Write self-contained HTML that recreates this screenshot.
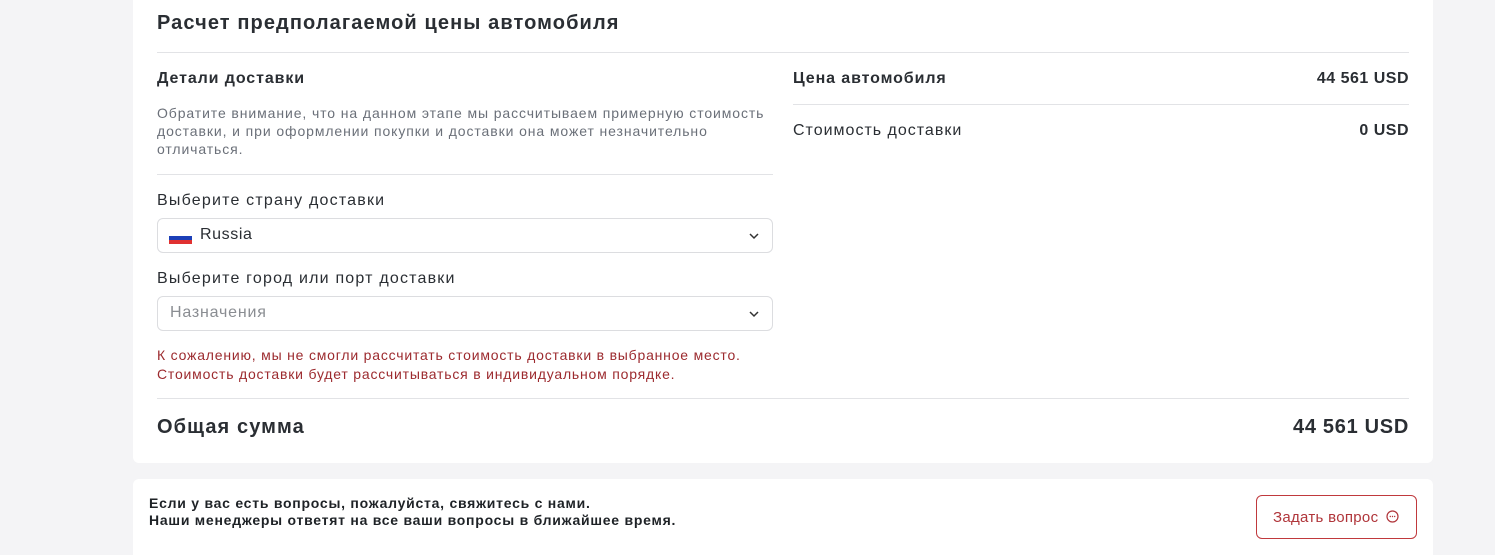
<!DOCTYPE html>
<html><head><meta charset="utf-8"><style>
*{box-sizing:border-box;margin:0;padding:0}
body{width:1495px;height:555px;background:#f4f4f6;font-family:"Liberation Sans",sans-serif;color:#2a2e33;position:relative;overflow:hidden}
.card{position:absolute;left:133px;top:0;width:1300px;height:463px;background:#fff;border-radius:0 0 6px 6px}
.a{position:absolute;white-space:nowrap}
.hr{position:absolute;height:1px;background:#e2e3e6}
.sel{position:absolute;left:24px;width:616px;height:35px;border:1px solid #dcdde0;border-radius:6px}
.chev{position:absolute;right:12px;top:11px}
.card2{position:absolute;left:133px;top:479px;width:1300px;height:76px;background:#fff;border-radius:6px 6px 0 0}
.btn{position:absolute;left:1123px;top:16px;width:161px;height:44px;border:1px solid #c0393d;border-radius:6px;color:#b0353a;font-size:15px;padding:13px 0 0 16px;letter-spacing:0.3px}
</style></head><body>
<div class="card">
<div class="a" style="left:24px;top:12px;font-size:20px;font-weight:bold;letter-spacing:1.1px">Расчет предполагаемой цены автомобиля</div>
<div class="hr" style="left:24px;top:52px;width:1252px"></div>
<div class="a" style="left:24px;top:70px;font-size:16px;font-weight:bold;letter-spacing:0.9px">Детали доставки</div>
<div class="a" style="left:24px;top:104px;font-size:14px;line-height:18px;color:#6b7079;letter-spacing:0.9px">Обратите внимание, что на данном этапе мы рассчитываем примерную стоимость<br>доставки, и при оформлении покупки и доставки она может незначительно<br>отличаться.</div>
<div class="hr" style="left:24px;top:174px;width:616px"></div>
<div class="a" style="left:24px;top:192px;font-size:16px;letter-spacing:1.2px">Выберите страну доставки</div>
<div class="sel" style="top:218px">
<div class="a" style="left:11px;top:13px;width:23px;height:12px;background:linear-gradient(#fff 0 33%,#1c3fb8 33% 66%,#e03131 66%)"></div>
<div class="a" style="left:42px;top:7px;font-size:16px;letter-spacing:0.6px">Russia</div>
<svg class="chev" width="12" height="12" viewBox="0 0 12 12"><path d="M2 4l4 4 4-4" fill="none" stroke="#333" stroke-width="1.5"/></svg>
</div>
<div class="a" style="left:24px;top:270px;font-size:16px;letter-spacing:1.2px">Выберите город или порт доставки</div>
<div class="sel" style="top:296px">
<div class="a" style="left:12px;top:7px;font-size:16px;color:#8a8d92;letter-spacing:0.8px">Назначения</div>
<svg class="chev" width="12" height="12" viewBox="0 0 12 12"><path d="M2 4l4 4 4-4" fill="none" stroke="#333" stroke-width="1.5"/></svg>
</div>
<div class="a" style="left:24px;top:346px;font-size:14px;line-height:19px;color:#9c2a2e;letter-spacing:0.8px">К сожалению, мы не смогли рассчитать стоимость доставки в выбранное место.<br>Стоимость доставки будет рассчитываться в индивидуальном порядке.</div>
<div class="hr" style="left:24px;top:398px;width:1252px"></div>
<div class="a" style="left:24px;top:416px;font-size:20px;font-weight:bold;letter-spacing:1.1px">Общая сумма</div>
<div class="a" style="right:24px;top:416px;font-size:20px;font-weight:bold;letter-spacing:0.7px">44 561 USD</div>
<div class="a" style="left:660px;top:70px;font-size:16px;font-weight:bold;letter-spacing:0.9px">Цена автомобиля</div>
<div class="a" style="right:24px;top:70px;font-size:16px;font-weight:bold;letter-spacing:0.5px">44 561 USD</div>
<div class="hr" style="left:660px;top:104px;width:616px"></div>
<div class="a" style="left:660px;top:122px;font-size:16px;letter-spacing:1px">Стоимость доставки</div>
<div class="a" style="right:24px;top:122px;font-size:16px;font-weight:bold;letter-spacing:0.5px">0 USD</div>
</div>
<div class="card2">
<div class="a" style="left:16px;top:16px;font-size:14px;line-height:17px;font-weight:bold;color:#1e2226;letter-spacing:0.75px">Если у вас есть вопросы, пожалуйста, свяжитесь с нами.<br>Наши менеджеры ответят на все ваши вопросы в ближайшее время.</div>
<div class="btn">Задать вопрос <svg width="13" height="13" viewBox="0 0 13 13" style="vertical-align:-1px;margin-left:3px"><circle cx="6.5" cy="6.5" r="5.5" fill="none" stroke="#b0353a" stroke-width="1.2"/><circle cx="4.3" cy="6.5" r=".7" fill="#b0353a"/><circle cx="6.5" cy="6.5" r=".7" fill="#b0353a"/><circle cx="8.7" cy="6.5" r=".7" fill="#b0353a"/></svg></div>
</div>
</body></html>
